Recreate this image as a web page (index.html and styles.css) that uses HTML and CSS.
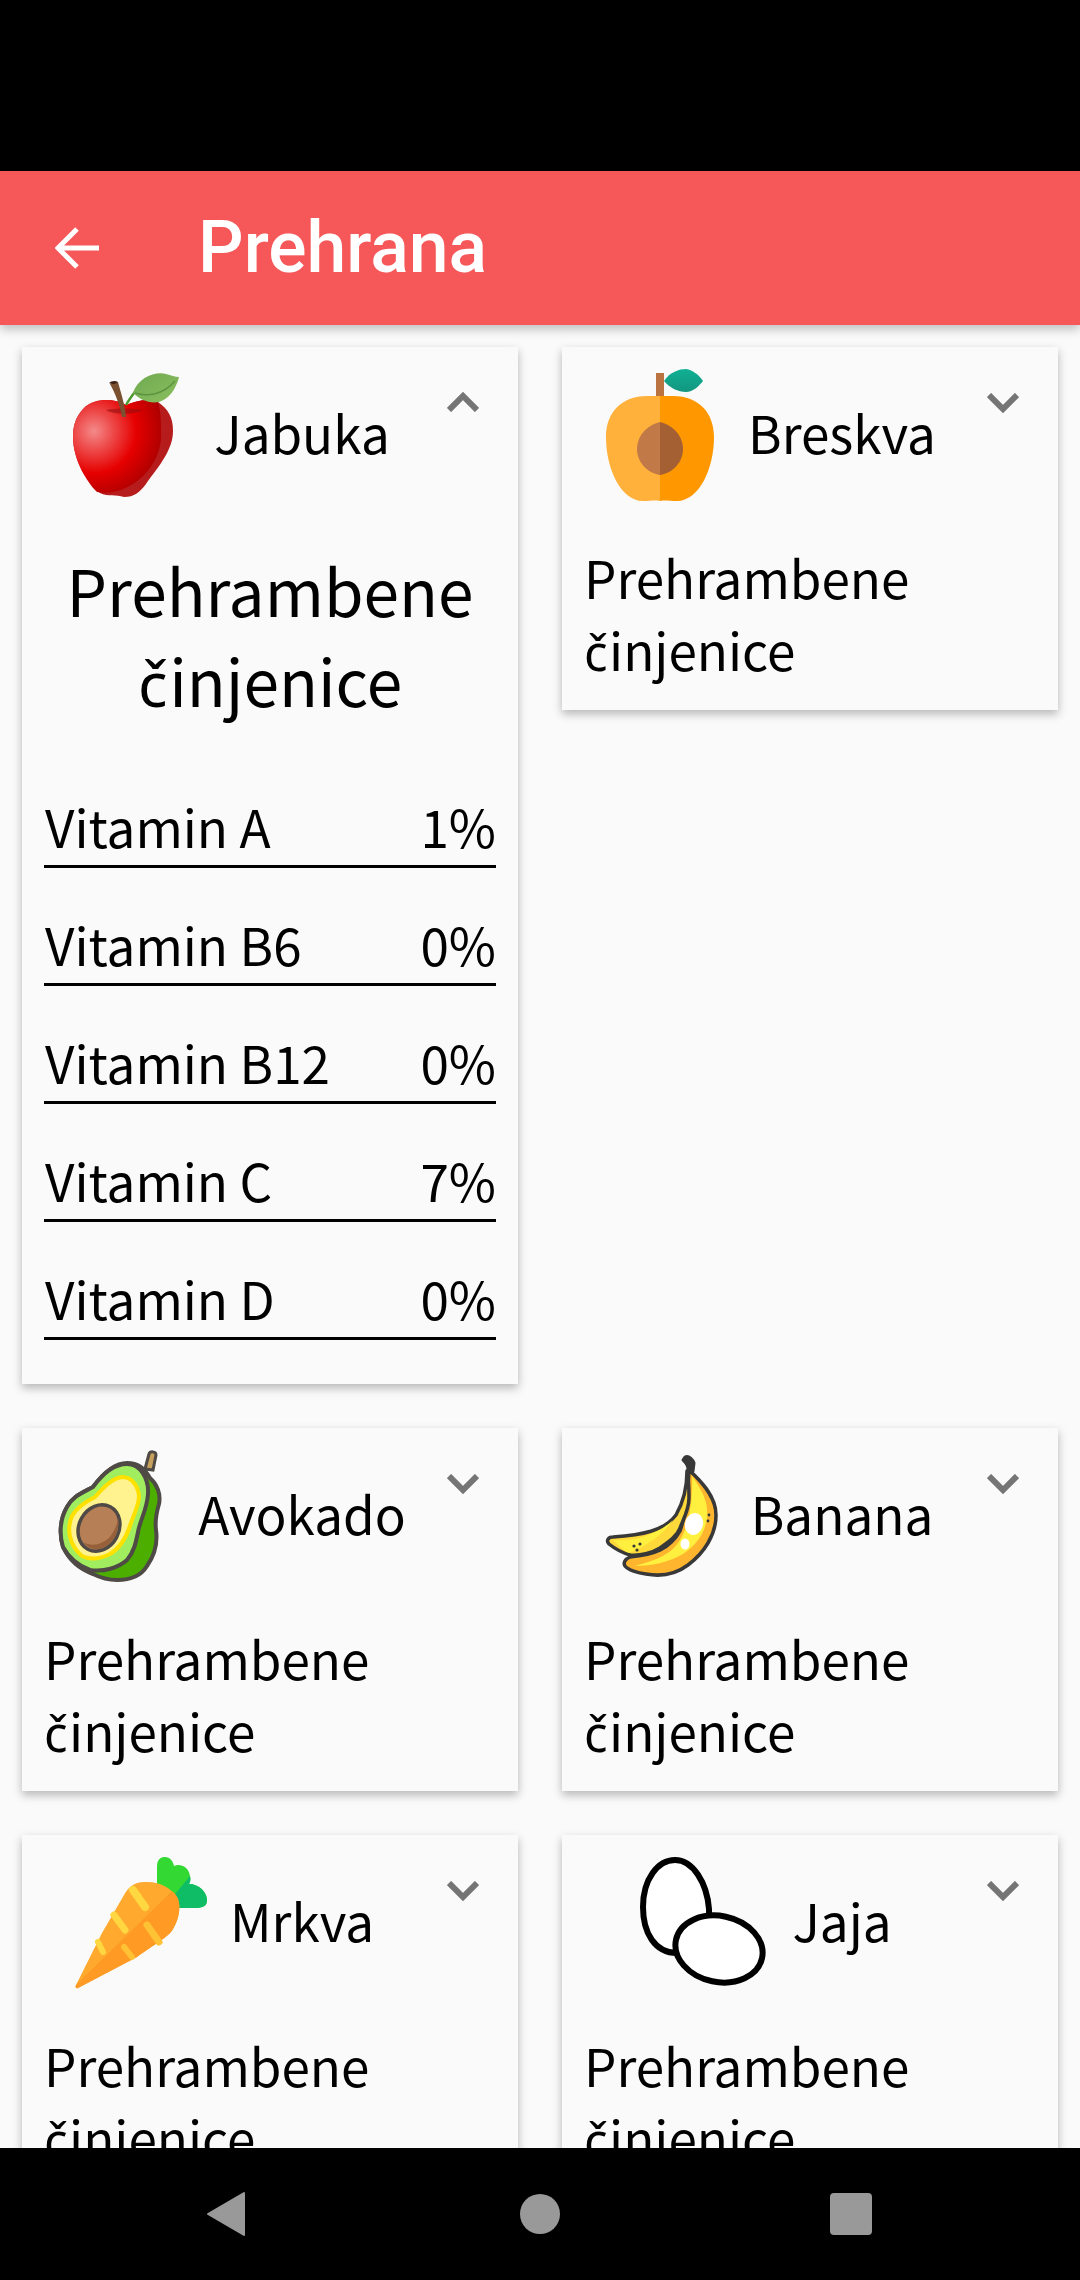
FILE: index.html
```html
<!DOCTYPE html>
<html lang="hr">
<head>
<meta charset="utf-8">
<title>Prehrana</title>
<link rel="stylesheet" href="styles.css">
</head>
<body>
<div class="phone">
  <div class="statusbar"></div>
  <header class="appbar">
    <svg class="back" viewBox="0 0 44 42"><path d="M44 21H3M22 2 3 21l19 19" fill="none" stroke="#fff" stroke-width="5"/></svg>
    <h1 class="title">Prehrana</h1>
  </header>
  <main class="content">
    <div class="grid">
      <article class="card">
        <div class="head">
          <div class="head-main">
            <svg class="pic" viewBox="-2 0 128 130">
              <defs>
                <radialGradient id="ap" gradientUnits="userSpaceOnUse" cx="30" cy="62" r="68"><stop offset="0" stop-color="#f48a8a"/><stop offset=".28" stop-color="#ee4a4a"/><stop offset=".62" stop-color="#e60000"/><stop offset="1" stop-color="#b00000"/></radialGradient>
                <linearGradient id="lf" x1="0" y1="0" x2="1" y2="1"><stop offset="0" stop-color="#6fa851"/><stop offset="1" stop-color="#8bc05f"/></linearGradient>
              </defs>
              <path d="M62 36C50 29 30 29 20 39 11 48 9 58 9 68c0 22 13 44 27 56 8 4 16 1 24 4 10 0 16-4 24-16 12-16 25-32 25-50 0-14-5-22-15-29-10-5-22-1-32 3Z" fill="#b71c1c"/>
              <path d="M62 36C50 29 30 29 20 39 11 48 9 58 9 68c0 22 13 44 24 55C48 126 68 120 83 103 94 90 98 75 97 62 97 52 97 44 94 33 84 29 72 32 62 36Z" fill="url(#ap)"/>
              <path d="M42 41c8-2 28-2 36 0-8 5-28 5-36 0Z" fill="#8e0f0f" opacity=".55"/>
              <path d="M62 36C66 29 70 24 73 20" fill="none" stroke="#4e9a2c" stroke-width="2.5"/>
              <path d="M69 24C74 8 92 2 102 5c5 1 9 3 13 3-3 12-10 22-20 25-10 2-20-3-26-9Z" fill="url(#lf)"/>
              <path d="M71 24c12 4 28 2 40-12" fill="none" stroke="#5c9440" stroke-width="1.5"/>
              <path d="M46 15 54 13C57 24 61 36 62 48H58C56 36 51 24 46 15Z" fill="#795030"/>
              <path d="M45 14c2-2 6-3 9-1-2 2-6 3-9 1Z" fill="#3e2415"/>
            </svg>
            <span class="name">Jabuka</span>
          </div>
          <svg class="chev chev-up" viewBox="0 0 32 20"><path d="M2 18 16 4l14 14" fill="none" stroke="#757575" stroke-width="6"/></svg>
        </div>
        <h2 class="facts-title">Prehrambene <span class="cc">č</span>injenice</h2>
        <div class="facts">
          <div class="fact"><span class="fact-name">Vitamin A</span><span>1%</span></div>
          <div class="fact"><span class="fact-name">Vitamin B6</span><span>0%</span></div>
          <div class="fact"><span class="fact-name">Vitamin B12</span><span>0%</span></div>
          <div class="fact"><span class="fact-name">Vitamin C</span><span>7%</span></div>
          <div class="fact"><span class="fact-name">Vitamin D</span><span>0%</span></div>
        </div>
      </article>

      <article class="card">
        <div class="head">
          <div class="head-main">
            <svg class="pic" viewBox="-3 0 128 130">
              <defs><linearGradient id="pl" x1="0" y1="0" x2="0" y2="1"><stop offset="0" stop-color="#10b094"/><stop offset="1" stop-color="#139680"/></linearGradient></defs>
              <rect x="57" y="4" width="8" height="26" fill="#bc7342"/>
              <path d="M65 12C71 3 80 0 87 0c7 1 13 6 17 12-4 5-10 11-17 11-8 0-16-4-22-11Z" fill="url(#pl)"/>
              <path d="M61 132C56 131 52 132 44 132 22 132 7 100 7 68 7 44 22 27 48 27H61Z" fill="#ffb13b"/>
              <path d="M61 132C66 131 70 132 78 132 100 132 115 100 115 68 115 44 100 27 74 27H61Z" fill="#ff9800"/>
              <path d="M61 53C48 56 38 67 38 80s10 24 23 26Z" fill="#c17a47"/>
              <path d="M61 53C74 56 84 67 84 80S74 104 61 106Z" fill="#a46033"/>
            </svg>
            <span class="name">Breskva</span>
          </div>
          <svg class="chev" viewBox="0 0 32 20"><path d="M2 2l14 14L30 2" fill="none" stroke="#757575" stroke-width="6"/></svg>
        </div>
        <p class="facts-link">Prehrambene <span class="cc">č</span>injenice</p>
      </article>

      <article class="card">
        <div class="head">
          <div class="head-main">
            <svg class="pic" viewBox="0 0 128 130">
              <path d="M99 19 103 4c1-3 7-3 7 1l-3 15Z" fill="#c6a05c" stroke="#4f4a45" stroke-width="3"/>
              <path d="M81 13C70 13 58 22 47 37 36 43 27 46 21 57 14 69 13 84 17 97c6 13 16 22 30 27 8 4 16 6 24 6 12 0 24-4 30-14 7-10 11-22 9-36-1-8 0-16 3-26 2-10-2-20-9-26C98 18 92 13 81 13Z" fill="#4caf00" stroke="#4f4a45" stroke-width="4"/>
              <path d="M81 14C70 14 58 22 47 37 36 43 27 46 21 57 14 69 13 84 17 97c6 11 16 19 27 23 14 2 28-2 37-10 7-8 9-18 11-28 2-12 9-22 10-38C103 28 94 14 81 14Z" fill="#a0ee60" stroke="#4f4a45" stroke-width="4"/>
              <path d="M76 27C66 28 57 38 49 47 39 52 31 57 26 66 20 80 24 96 36 106c8 4 18 3 28-2 10-6 16-16 20-28 3-10 9-20 9-30C92 36 86 27 76 27Z" fill="#fff38f" stroke="#ffe100" stroke-width="4"/>
              <ellipse cx="53" cy="78" rx="20" ry="24" transform="rotate(28 53 78)" fill="#b67f56" stroke="#4f4a45" stroke-width="3.5"/>
              <path d="M37 92c10 6 20 1 26-4 5-6 8-12 9-20 2 10-3 22-10 27-8 6-18 6-25-3Z" fill="#96603a"/>
            </svg>
            <span class="name">Avokado</span>
          </div>
          <svg class="chev" viewBox="0 0 32 20"><path d="M2 2l14 14L30 2" fill="none" stroke="#757575" stroke-width="6"/></svg>
        </div>
        <p class="facts-link">Prehrambene <span class="cc">č</span>injenice</p>
      </article>

      <article class="card">
        <div class="head">
          <div class="head-main">
            <svg class="pic" viewBox="-2 0 128 130">
              <path d="M88 20C99 30 115 46 115 65c0 20-12 38-28 50-12 9-26 12-42 9-8-1-18-4-21-8-2-3 0-7 5-9 24-2 40-8 50-26 5-14 8-40 9-61Z" fill="#ffb62e" stroke="#383838" stroke-width="3.5" stroke-linejoin="round"/>
              <path d="M91 26c8 12 17 24 15 42-2 16-12 28-24 36-14 8-30 12-48 12 22-6 38-12 46-28 8-14 12-38 11-62Z" fill="#fff03f"/>
              <path d="M86 21c0 14-3 30-11 44-12 16-34 20-63 22-5 0-7 4-4 7 5 4 14 9 21 11 10 1 22-2 30-7 10-7 17-12 20-20 3-8 9-18 9-30 0-9 0-18-2-27Z" fill="#ffd83a" stroke="#383838" stroke-width="3.5" stroke-linejoin="round"/>
              <path d="M12 90C30 92 55 86 72 70 60 88 40 98 28 103 22 100 16 94 12 90Z" fill="#fff03f"/>
              <path d="M84 7C88 5 92 10 93 13L92 21H87C88 16 84 12 82 10Z" fill="#383838" stroke="#383838" stroke-width="3" stroke-linejoin="round"/>
              <ellipse cx="93" cy="74" rx="9" ry="11" transform="rotate(15 93 74)" fill="#fff"/>
              <ellipse cx="84" cy="94" rx="4.5" ry="5.5" fill="#fff"/>
              <circle cx="33" cy="96" r="1.6" fill="#383838"/><circle cx="39" cy="94" r="1.6" fill="#383838"/><circle cx="36" cy="100" r="1.6" fill="#383838"/>
              <circle cx="108" cy="65" r="1.4" fill="#383838"/><circle cx="107" cy="71" r="1.4" fill="#383838"/>
            </svg>
            <span class="name">Banana</span>
          </div>
          <svg class="chev" viewBox="0 0 32 20"><path d="M2 2l14 14L30 2" fill="none" stroke="#757575" stroke-width="6"/></svg>
        </div>
        <p class="facts-link">Prehrambene <span class="cc">č</span>injenice</p>
      </article>

      <article class="card">
        <div class="head">
          <div class="head-main">
            <svg class="pic" viewBox="-3 0 128 130">
              <path d="M76 30V10C76 2 80 0 84 0c5 0 8 4 9 9 5-3 15 0 16 10 1 4 0 6-1 8 10 0 18 8 18 16 0 6-4 8-12 8H98L88 40Z" fill="#33d833"/>
              <path d="M109 19c1 4 0 6-1 8 10 0 18 8 18 16 0 6-4 8-12 8H98L90 42Z" fill="#0fbd66"/>
              <path d="M66 25C54 24 47 30 43 38L21 76-5 128c-1 2 0 4 2 3L56 100C72 88 88 80 92 72 98 62 100 50 97 42 92 32 80 25 66 25Z" fill="#ffaa2f"/>
              <path d="M-5 128c-1 2 0 4 2 3L56 100C72 88 88 80 92 72 98 62 100 50 97 42 96 39 94 36 91 34Z" fill="#ff9a24"/>
              <path d="M52 33 64 50" stroke="#ffd740" stroke-width="8" stroke-linecap="round" fill="none"/>
              <path d="M33 58 44 73" stroke="#ffd740" stroke-width="7" stroke-linecap="round" fill="none"/>
              <path d="M66 68 78 85" stroke="#ffc235" stroke-width="7" stroke-linecap="round" fill="none"/>
              <path d="M17 85 22 95" stroke="#ffd740" stroke-width="6" stroke-linecap="round" fill="none"/>
              <path d="M43 90 51 100" stroke="#ffc235" stroke-width="6" stroke-linecap="round" fill="none"/>
            </svg>
            <span class="name">Mrkva</span>
          </div>
          <svg class="chev" viewBox="0 0 32 20"><path d="M2 2l14 14L30 2" fill="none" stroke="#757575" stroke-width="6"/></svg>
        </div>
        <p class="facts-link">Prehrambene <span class="cc">č</span>injenice</p>
      </article>

      <article class="card">
        <div class="head">
          <div class="head-main">
            <svg class="pic" viewBox="-1 0 128 130">
              <path d="M34 3C17 3 2 22 2 50c0 26 12 46 34 46 22-1 34-20 32-44C66 26 52 3 34 3Z" fill="#fff" stroke="#000" stroke-width="6"/>
              <ellipse cx="78" cy="92" rx="44" ry="33" transform="rotate(12 78 92)" fill="#fff" stroke="#000" stroke-width="6"/>
            </svg>
            <span class="name">Jaja</span>
          </div>
          <svg class="chev" viewBox="0 0 32 20"><path d="M2 2l14 14L30 2" fill="none" stroke="#757575" stroke-width="6"/></svg>
        </div>
        <p class="facts-link">Prehrambene <span class="cc">č</span>injenice</p>
      </article>
    </div>
  </main>
  <nav class="navbar">
    <svg class="nav-back" viewBox="0 0 38 46"><path d="M37 2v42L1 23Z" fill="#999" stroke="#999" stroke-width="2" stroke-linejoin="round"/></svg>
    <svg class="nav-home" viewBox="0 0 40 40"><circle cx="20" cy="20" r="20" fill="#999"/></svg>
    <svg class="nav-recent" viewBox="0 0 42 42"><rect width="42" height="42" rx="4" fill="#999"/></svg>
  </nav>
</div>
</body>
</html>
```

FILE: styles.css
```css
* { box-sizing: border-box; }
html, body { margin: 0; padding: 0; }
body {
  background: #000;
  font-family: "Noto Sans CJK SC", "Noto Sans", sans-serif;
  color: #000;
}
.phone {
  width: 1080px;
  height: 2280px;
  display: flex;
  flex-direction: column;
  overflow: hidden;
  background: #fafafa;
}
.statusbar { height: 171px; background: #000; flex: none; }
.appbar {
  height: 154px;
  flex: none;
  background: #f65859;
  display: flex;
  align-items: center;
  padding-left: 55px;
  gap: 99px;
  box-shadow: 0 4px 10px rgba(0, 0, 0, .25);
  z-index: 1;
}
.back { width: 44px; height: 42px; flex: none; }
.title {
  margin: 0;
  font: 500 71.5px/1 Roboto, sans-serif;
  color: #fff;
}
.content { flex: 1; min-height: 0; overflow: hidden; }
.grid {
  display: grid;
  grid-template-columns: 496px 496px;
  column-gap: 44px;
  row-gap: 44px;
  padding: 22px 22px 0;
  align-items: start;
}
.card {
  background: #fafafa;
  box-shadow: 0 4px 9px rgba(0, 0, 0, .28);
}
.head { display: flex; align-items: flex-start; padding-top: 22px; }
.head-main {
  width: 408px;
  flex: none;
  display: flex;
  align-items: center;
  justify-content: center;
  gap: 24px;
}
.pic { width: 128px; height: 130px; flex: none; overflow: visible; }
.name { font-size: 51.2px; line-height: 72px; margin-bottom: 4px; }
.chev { width: 32px; height: 20px; flex: none; margin: 24px 0 0 17px; }
.chev-up { margin-top: 23px; }
.cc { font-family: "Noto Sans", sans-serif; font-size: .96em; line-height: 0; letter-spacing: .03em; }
.facts-link {
  margin: 0;
  padding: 42px 22px 25px;
  font-size: 51.2px;
  line-height: 72px;
}
.facts-title {
  margin: 0;
  padding: 45px 22px 0;
  text-align: center;
  font-size: 64px;
  line-height: 90px;
  font-weight: 400;
}
.facts { padding: 66px 22px 44px; }
.fact {
  display: flex;
  justify-content: space-between;
  font-size: 51.2px;
  line-height: 72px;
  padding-bottom: 3px;
  border-bottom: 3px solid #000;
  margin-top: 40px;
}
.fact:first-child { margin-top: 0; }
.fact-name { padding-left: 1px; }
.navbar {
  height: 132px;
  flex: none;
  background: #000;
  z-index: 2;
  display: flex;
  justify-content: center;
  align-items: center;
  padding-right: 1px;
}
.nav-back { width: 38px; height: 46px; flex: none; margin-right: 275px; }
.nav-home { width: 40px; height: 40px; flex: none; margin-right: 270px; }
.nav-recent { width: 42px; height: 42px; flex: none; }
```
